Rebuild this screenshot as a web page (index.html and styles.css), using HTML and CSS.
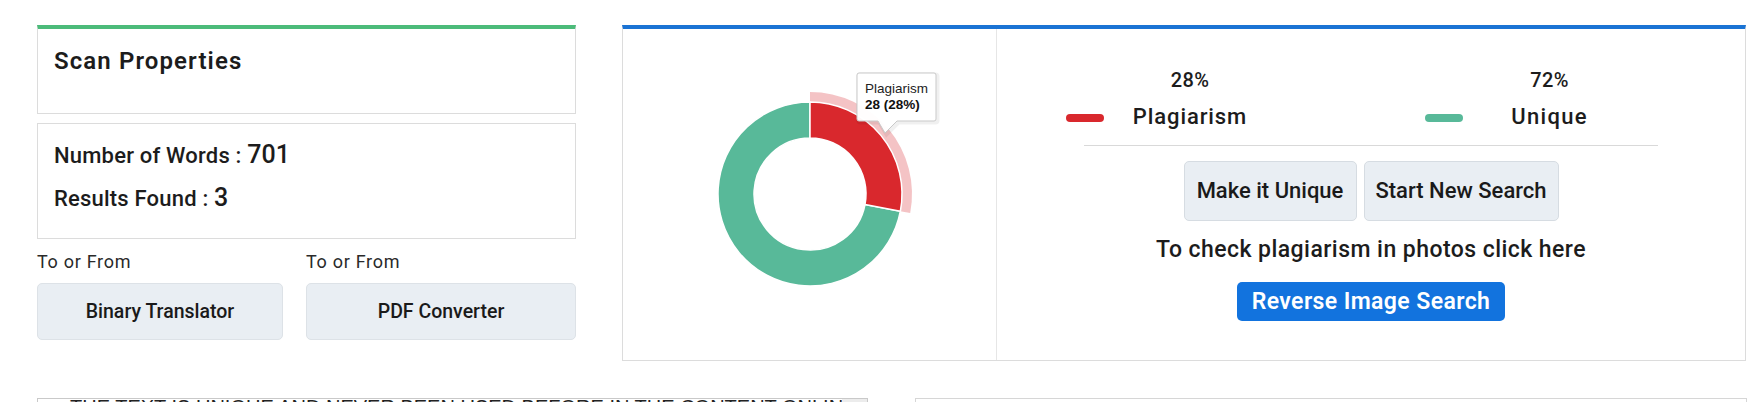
FILE: index.html
```html
<!DOCTYPE html>
<html>
<head>
<meta charset="utf-8">
<link rel="stylesheet" href="styles.css">
</head>
<body>
<div class="page">
  <div class="top-row">
    <div class="left-col">
      <div class="card card-head">
        <h2 class="card-title">Scan Properties</h2>
      </div>
      <div class="card card-stats">
        <div class="stat"><span class="stat-label">Number of Words : </span><span class="stat-value">701</span></div>
        <div class="stat"><span class="stat-label">Results Found : </span><span class="stat-value">3</span></div>
      </div>
      <div class="tools">
        <div class="tool tool-a">
          <div class="tool-label">To or From</div>
          <a class="tool-btn">Binary Translator</a>
        </div>
        <div class="tool tool-b">
          <div class="tool-label">To or From</div>
          <a class="tool-btn">PDF Converter</a>
        </div>
      </div>
    </div>

    <div class="chart-card">
      <div class="chart-area">
        <svg class="donut" width="374" height="331" viewBox="0 0 374 331">
          <path d="M187,63 A102,102 0 0 1 287.19,184.11 L277.37,182.24 A92,92 0 0 0 187,73 Z" fill="#d9282d" fill-opacity="0.28"/>
          <path d="M277.37,182.24 A92,92 0 1 1 187,73 L187,109 A56,56 0 1 0 242.01,175.49 Z" fill="#58b999" stroke="#ffffff" stroke-width="1.5" stroke-linejoin="round"/>
          <path d="M187,73 A92,92 0 0 1 277.37,182.24 L242.01,175.49 A56,56 0 0 0 187,109 Z" fill="#d9282d" stroke="#ffffff" stroke-width="1.5" stroke-linejoin="round"/>
          <g class="tip">
            <path d="M236,44 H311 Q313,44 313,46 V90 Q313,92 311,92 H274 L262,104 L255,92 H236 Q234,92 234,90 V46 Q234,44 236,44 Z" transform="translate(1.5,1.5)" fill="none" stroke="#000" stroke-opacity="0.06" stroke-width="4"/>
            <path d="M236,44 H311 Q313,44 313,46 V90 Q313,92 311,92 H274 L262,104 L255,92 H236 Q234,92 234,90 V46 Q234,44 236,44 Z" fill="#ffffff" fill-opacity="0.96" stroke="#c9c9c9" stroke-width="1"/>
            <text x="242" y="64" class="tip-name">Plagiarism</text>
            <text x="242" y="80" class="tip-val">28 (28%)</text>
          </g>
        </svg>
      </div>
      <div class="result-panel">
        <div class="legend">
          <div class="pct pct-1">28%</div>
          <div class="pct pct-2">72%</div>
          <span class="swatch swatch-red"></span>
          <div class="leg-label leg-1">Plagiarism</div>
          <span class="swatch swatch-green"></span>
          <div class="leg-label leg-2">Unique</div>
        </div>
        <div class="divider"></div>
        <div class="actions">
          <a class="act-btn btn-unique">Make it Unique</a>
          <a class="act-btn btn-new">Start New Search</a>
        </div>
        <p class="photo-note">To check plagiarism in photos click here</p>
        <a class="reverse-btn">Reverse Image Search</a>
      </div>
    </div>
  </div>

  <div class="bottom-row">
    <div class="text-box">
      <div class="text-content">THE TEXT IS UNIQUE AND NEVER BEEN USED BEFORE IN THE CONTENT ONLINE. THE TEXT IS UNIQUE</div>
      <div class="scroll-strip"></div>
    </div>
    <div class="side-box"></div>
  </div>
</div>
</body>
</html>
```

FILE: styles.css
```css
* { box-sizing: border-box; }

html, body {
  margin: 0;
  padding: 0;
  background: #ffffff;
  overflow: hidden;
}

body {
  font-family: "Roboto", "Liberation Sans", sans-serif;
  color: #1f1f1f;
}

.page {
  padding: 25px 0 0 37px;
  width: 1756px;
  height: 402px;
}

.top-row {
  display: flex;
  gap: 46px;
  align-items: flex-start;
}

/* ---------- left column ---------- */
.left-col {
  width: 539px;
  display: flex;
  flex-direction: column;
}

.card {
  border: 1px solid #dcdcdc;
  background: #fff;
}

.card-head {
  border-top: 4px solid #4cbb7a;
  height: 89px;
  padding: 17px 16px 0 16px;
}

.card-title {
  margin: 0;
  font-size: 24px;
  line-height: 30px;
  font-weight: 600;
  letter-spacing: 1.1px;
  color: #1c1c1c;
}

.card-stats {
  margin-top: 9px;
  height: 116px;
  padding: 9px 16px 0 16px;
}

.stat {
  line-height: 43px;
  height: 43px;
  white-space: nowrap;
}

.stat-label {
  font-size: 22px;
  font-weight: 500;
  letter-spacing: 0.2px;
  color: #1c1c1c;
}

.stat-value {
  font-size: 25px;
  font-weight: 500;
  color: #1c1c1c;
}

.tools {
  display: flex;
  gap: 23px;
  margin-top: 12px;
}

.tool-a { width: 246px; }
.tool-b { width: 270px; }

.tool-label {
  font-size: 18px;
  line-height: 22px;
  letter-spacing: 0.7px;
  color: #2a2a2a;
  margin-bottom: 10px;
}

.tool-btn {
  display: flex;
  align-items: center;
  justify-content: center;
  height: 57px;
  background: #e9eef3;
  border: 1px solid #dde2e7;
  border-radius: 5px;
  font-size: 19.5px;
  line-height: 24px;
  font-weight: 500;
  color: #1a1a1a;
}

/* ---------- chart card ---------- */
.chart-card {
  width: 1124px;
  height: 336px;
  border: 1px solid #dcdcdc;
  border-top: 4px solid #1a73d4;
  display: flex;
}

.chart-area {
  width: 374px;
  border-right: 1px solid #e6e6e6;
  flex: none;
}

.donut { display: block; }

.tip-name {
  font-family: "Liberation Sans", Arial, sans-serif;
  font-size: 13.5px;
  fill: #222;
}

.tip-val {
  font-family: "Liberation Sans", Arial, sans-serif;
  font-size: 13.5px;
  font-weight: 700;
  fill: #111;
}

.result-panel {
  flex: 1;
  display: flex;
  flex-direction: column;
  align-items: center;
  padding-top: 39px;
}

.legend {
  align-self: flex-start;
  margin-left: 69px;
  display: grid;
  grid-template-columns: 38px 29px 114px 178px 38px 49px 75px;
  grid-template-rows: 24px 28px;
  row-gap: 11px;
  align-items: center;
}

.pct {
  font-size: 20px;
  line-height: 24px;
  font-weight: 500;
  letter-spacing: 0.3px;
  color: #1c1c1c;
  justify-self: center;
  white-space: nowrap;
}

.pct-1 { grid-column: 3; grid-row: 1; }
.pct-2 { grid-column: 7; grid-row: 1; }

.swatch {
  display: block;
  width: 38px;
  height: 8px;
  border-radius: 4px;
  margin-top: 2px;
}

.swatch-red { background: #d9282d; grid-column: 1; grid-row: 2; }
.swatch-green { background: #58b999; grid-column: 5; grid-row: 2; }

.leg-label {
  font-size: 22px;
  line-height: 28px;
  font-weight: 500;
  color: #1c1c1c;
  justify-self: center;
  white-space: nowrap;
}

.leg-1 { grid-column: 3; grid-row: 2; letter-spacing: 0.9px; }
.leg-2 { grid-column: 7; grid-row: 2; letter-spacing: 1.3px; }

.divider {
  width: 574px;
  height: 1px;
  background: #d9d9d9;
  margin-top: 14px;
}

.actions {
  display: flex;
  gap: 7px;
  margin-top: 15px;
}

.act-btn {
  display: flex;
  align-items: center;
  justify-content: center;
  height: 60px;
  background: #e9eef3;
  border: 1px solid #d6dce2;
  border-radius: 5px;
  font-size: 22px;
  line-height: 28px;
  font-weight: 500;
  color: #1a1a1a;
  white-space: nowrap;
}

.btn-unique { width: 173px; }
.btn-new { width: 195px; }

.photo-note {
  margin: 15px 0 0 0;
  font-size: 23px;
  line-height: 28px;
  font-weight: 500;
  letter-spacing: 0.45px;
  color: #1c1c1c;
  white-space: nowrap;
}

.reverse-btn {
  display: flex;
  align-items: center;
  justify-content: center;
  margin-top: 18px;
  width: 268px;
  height: 39px;
  background: #1273de;
  border-radius: 5px;
  font-size: 23px;
  line-height: 28px;
  font-weight: 600;
  letter-spacing: 0.4px;
  color: #ffffff;
  white-space: nowrap;
}

/* ---------- bottom row ---------- */
.bottom-row {
  display: flex;
  gap: 47px;
  margin-top: 37px;
}

.text-box {
  width: 831px;
  height: 120px;
  border: 1px solid #c9c9c9;
  display: flex;
  overflow: hidden;
}

.text-content {
  flex: 1;
  padding: 0 0 0 32px;
  font-family: "Liberation Sans", Arial, sans-serif;
  font-size: 20px;
  line-height: 22px;
  margin-top: -3px;
  color: #222;
  white-space: nowrap;
  overflow: hidden;
}

.scroll-strip {
  width: 25px;
  background: #ececec;
  flex: none;
}

.side-box {
  width: 832px;
  height: 120px;
  border: 1px solid #d6d6d6;
}
```
